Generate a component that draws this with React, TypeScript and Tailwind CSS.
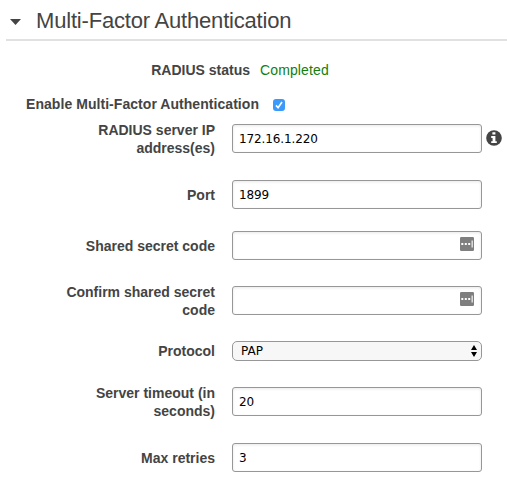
import { ReactNode, useState } from "react";

const labelClass =
  "w-[215px] shrink-0 text-right text-[14px] leading-[18px] font-bold text-[#444]";
const inputClass =
  "h-[29px] w-[250px] rounded-[3px] border border-[#979797] bg-white px-[6px] font-['DejaVu_Sans',sans-serif] text-[12px] tracking-[-0.12px] text-black shadow-[inset_0_1px_3px_rgba(0,0,0,0.09)] outline-none";

function Row({ label, className, children }: { label: ReactNode; className: string; children: ReactNode }) {
  return (
    <div className={`flex items-center ${className}`}>
      <label className={labelClass}>{label}</label>
      <div className="ml-[17px] flex items-center">{children}</div>
    </div>
  );
}

function InfoIcon() {
  return (
    <svg className="-mt-px ml-1 block" width="16" height="16" viewBox="0 0 16 16" aria-hidden="true">
      <circle cx="8" cy="8" r="7.8" fill="#444" />
      <path d="M6.4 2.2h3v2.4h-3zM5.2 6h4.2v5.2h1.4v1.9H5.2v-1.9h1.4V7.9H5.2z" fill="#fff" />
    </svg>
  );
}

function SecretInput() {
  return (
    <div className="relative">
      <input type="password" className={`${inputClass} block`} />
      <svg className="absolute top-[6px] right-[8px]" width="14" height="14" viewBox="0 0 14 14" aria-hidden="true">
        <rect width="14" height="14" rx="1.2" fill="#7f7f7f" />
        <path d="M1.3 6h2v2h-2zM4.8 6h2v2h-2zM8.2 6h2v2h-2zM11.6 3.5h1.1v7h-1.1z" fill="#fff" />
      </svg>
    </div>
  );
}

export default function App() {
  const [enabled, setEnabled] = useState(true);
  return (
    <div className="h-[479px] w-[507px] overflow-hidden bg-white font-['Liberation_Sans',Arial,sans-serif]">
      <header className="ml-[6px] flex h-[41px] items-center border-b-2 border-[#e1e1e1]">
        <svg className="ml-[4px] mt-[4px]" width="11" height="6" viewBox="0 0 11 6" aria-hidden="true">
          <path d="M0 0h11L5.5 6z" fill="#444" />
        </svg>
        <h1 className="mt-[2px] ml-[15px] text-[22px] leading-[26px] tracking-[-0.19px] whitespace-nowrap text-[#444]">Multi-Factor Authentication</h1>
      </header>
      <div className="mt-[20px] flex text-[14px] leading-[18px]">
        <span className="w-[250px] text-right font-bold text-[#444]">RADIUS status</span>
        <span className="ml-[10px] tracking-[0.12px] text-[#118011]">Completed</span>
      </div>
      <div className="mt-[16px] flex h-[18px] items-center">
        <label htmlFor="mfa" className="w-[259px] text-right text-[14px] leading-[18px] font-bold tracking-[0.05px] whitespace-nowrap text-[#444]">
          Enable Multi-Factor Authentication
        </label>
        <button
          id="mfa"
          role="checkbox"
          aria-checked={enabled}
          onClick={() => setEnabled(!enabled)}
          className="mt-[2px] ml-[14px] flex size-[12px] items-center justify-center rounded-[3px] bg-[#3b99fc]"
        >
          {enabled && (
            <svg width="12" height="12" viewBox="0 0 12 12" aria-hidden="true">
              <path d="M3 6.4l2.1 2.4L9 3" fill="none" stroke="#fff" strokeWidth="1.6" />
            </svg>
          )}
        </button>
      </div>
      <Row className="mt-[7px] h-[37px]" label={<>RADIUS server IP<br />address(es)</>}>
        <input className={inputClass} defaultValue="172.16.1.220" />
        <InfoIcon />
      </Row>
      <Row className="mt-[19px] h-[37px]" label="Port">
        <input className={inputClass} defaultValue="1899" />
      </Row>
      <Row className="mt-[14px] h-[37px]" label="Shared secret code">
        <SecretInput />
      </Row>
      <Row className="mt-[18px] h-[37px]" label={<>Confirm shared secret<br />code</>}>
        <SecretInput />
      </Row>
      <Row className="mt-[14px] h-[36px]" label="Protocol">
        <div className="relative">
          <select className="block h-[20px] w-[250px] appearance-none rounded-[5px] border border-[#979797] bg-[#f7f7f7] pl-[8px] font-['DejaVu_Sans',sans-serif] text-[12px] leading-[18px] text-black outline-none">
            <option>PAP</option>
          </select>
          <svg className="pointer-events-none absolute top-[4px] right-[5px]" width="6" height="12" viewBox="0 0 6 12" aria-hidden="true">
            <path d="M3 0l3 5H0zM0 7h6l-3 5z" fill="#000" />
          </svg>
        </div>
      </Row>
      <Row className="mt-[14px] h-[37px]" label={<>Server timeout (in<br />seconds)</>}>
        <input className={inputClass} defaultValue="20" />
      </Row>
      <Row className="mt-[19px] h-[37px]" label="Max retries">
        <input className={inputClass} defaultValue="3" />
      </Row>
    </div>
  );
}
